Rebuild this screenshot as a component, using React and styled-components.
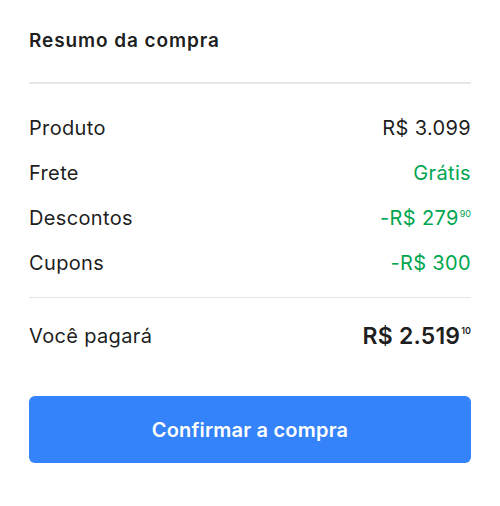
import React from 'react';
import styled, { createGlobalStyle } from 'styled-components';

const GlobalStyle = createGlobalStyle`
  body {
    margin: 0;
    background: #fff;
    font-family: 'Inter', 'Liberation Sans', sans-serif;
    color: rgba(0, 0, 0, 0.9);
  }
`;

const Card = styled.div`
  width: 500px;
  box-sizing: border-box;
  padding: 30px 29px;
`;

const Title = styled.h2`
  margin: 0;
  font-size: 19px;
  font-weight: 600;
  letter-spacing: 0.9px;
  line-height: 22px;
  padding-bottom: 30px;
  border-bottom: 2px solid #e6e6e6;
`;

const List = styled.div`
  display: flex;
  flex-direction: column;
  padding: 32px 0 22px;
  gap: 21px;
  border-bottom: 1px solid #e6e6e6;
`;

const Row = styled.div`
  display: flex;
  justify-content: space-between;
  align-items: center;
  font-size: 20px;
  letter-spacing: 0.35px;
  line-height: 24px;
`;

const Value = styled.span`
  display: flex;
  align-items: flex-start;
  color: ${(p) => (p.$green ? '#00a650' : 'rgba(0, 0, 0, 0.9)')};
`;

const Cents = styled.span`
  font-size: 9px;
  letter-spacing: 0;
  line-height: 9px;
  margin-top: ${(p) => p.$top || 3}px;
  margin-left: 1px;
`;

const TotalRow = styled(Row)`
  padding: 26px 0 0;
`;

const Total = styled.span`
  font-size: 23px;
  font-weight: 600;
  letter-spacing: 0.2px;
  display: flex;
  align-items: flex-start;
`;

const Button = styled.button`
  margin-top: 48px;
  width: 100%;
  height: 67px;
  border: none;
  border-radius: 6px;
  background: #3483fa;
  color: #fff;
  font-family: inherit;
  font-size: 20px;
  font-weight: 600;
  letter-spacing: 0.2px;
  cursor: pointer;
`;

const items = [
  { label: 'Produto', value: 'R$ 3.099' },
  { label: 'Frete', value: 'Grátis', green: true },
  { label: 'Descontos', value: '-R$ 279', cents: '90', green: true },
  { label: 'Cupons', value: '-R$ 300', green: true },
];

export default function App() {
  return (
    <>
      <GlobalStyle />
      <Card>
        <Title>Resumo da compra</Title>
        <List>
          {items.map((it) => (
            <Row key={it.label}>
              <span>{it.label}</span>
              <Value $green={it.green}>
                {it.value}
                {it.cents && <Cents>{it.cents}</Cents>}
              </Value>
            </Row>
          ))}
        </List>
        <TotalRow>
          <span>Você pagará</span>
          <Total>
            R$ 2.519<Cents $top={2}>10</Cents>
          </Total>
        </TotalRow>
        <Button>Confirmar a compra</Button>
      </Card>
    </>
  );
}
